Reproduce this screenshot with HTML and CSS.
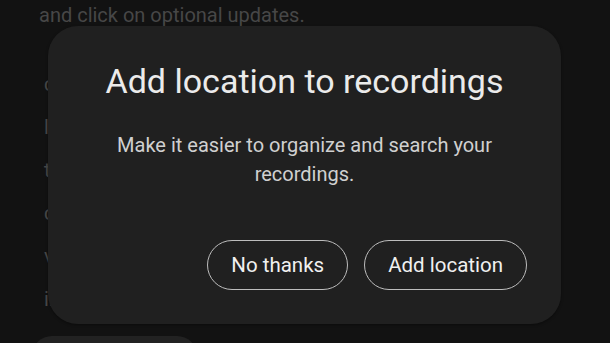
FILE: index.html
```html
<!DOCTYPE html>
<html>
<head>
<meta charset="utf-8">
<link rel="stylesheet" href="styles.css">
</head>
<body>
<div class="page">
  <p class="line first">and click on optional updates.</p>
  <div class="para">
    <p class="line">check</p>
    <p class="line">list</p>
    <p class="line">then</p>
    <p class="line">can</p>
    <p class="line">via</p>
    <p class="line">in</p>
  </div>
  <div class="pill"></div>
</div>
<div class="scrim">
  <div class="dialog">
    <h1 class="title">Add location to recordings</h1>
    <p class="body">Make it easier to organize and search your recordings.</p>
    <div class="actions">
      <button class="btn">No thanks</button>
      <button class="btn">Add location</button>
    </div>
  </div>
</div>
</body>
</html>
```
FILE: styles.css
```css
html, body {
  margin: 0;
  padding: 0;
  background: #121212;
  width: 610px;
  height: 343px;
  overflow: hidden;
  font-family: Roboto, "Noto Sans", sans-serif;
}
.page {
  height: 343px;
  box-sizing: border-box;
  overflow: hidden;
  padding: 0 0 0 44px;
  color: #474747;
}
.line {
  margin: 0;
  font-size: 20px;
  line-height: 43px;
  white-space: nowrap;
}
.first {
  margin-top: -6px;
  margin-left: -5px;
}
.para {
  margin-top: 26px;
}
.pill {
  margin-left: -12px;
  margin-top: 15px;
  width: 165px;
  height: 40px;
  border-radius: 20px;
  background: #222222;
}
.scrim {
  position: absolute;
  left: 0;
  top: 0;
  width: 610px;
  height: 343px;
}
.dialog {
  position: absolute;
  left: 48px;
  top: 26px;
  width: 513px;
  height: 298px;
  box-sizing: border-box;
  background: #202020;
  border-radius: 30px;
  padding: 35px 34px 0 34px;
  display: flex;
  flex-direction: column;
  align-items: center;
  box-shadow: 0 1px 3px rgba(0, 0, 0, 0.4);
}
.title {
  margin: 0;
  font-weight: 400;
  font-size: 34px;
  line-height: 40px;
  color: #ebebeb;
  text-align: center;
  white-space: nowrap;
}
.body {
  margin: 30px 0 0 0;
  width: 400px;
  font-size: 20px;
  line-height: 29px;
  color: #d0d0d0;
  text-align: center;
}
.actions {
  align-self: stretch;
  display: flex;
  justify-content: flex-end;
  gap: 16px;
  margin-top: 51px;
}
.btn {
  font-family: Roboto, "Noto Sans", sans-serif;
  font-size: 20.5px;
  color: #f0f0f0;
  background: transparent;
  border: 1.5px solid #bdbdbd;
  border-radius: 26px;
  height: 50px;
  padding: 0 23px;
}
```
